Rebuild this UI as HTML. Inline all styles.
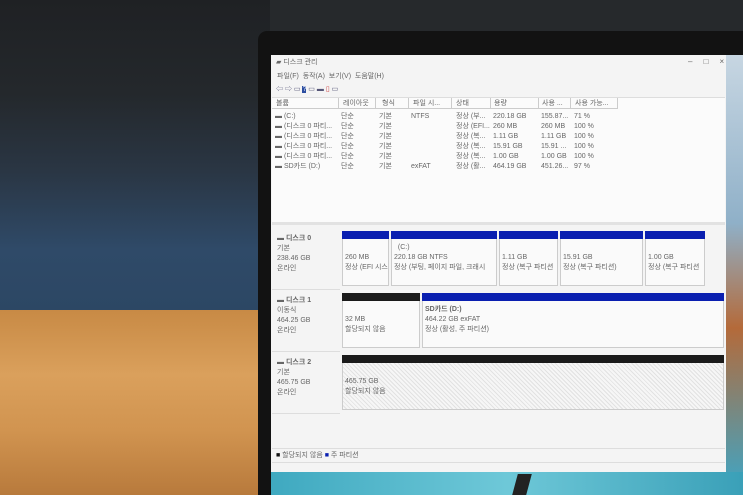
<!DOCTYPE html><html><head><style>
*{margin:0;padding:0;box-sizing:border-box}
body{width:743px;height:495px;overflow:hidden;position:relative;font-family:"Liberation Sans","Noto Sans CJK KR",sans-serif;font-size:7px;color:#555;background:#26292c}
.a{position:absolute}
.t{position:absolute;white-space:nowrap;font-size:7px;color:#666;line-height:8px}
.bar{position:absolute;height:8px}
.box{position:absolute;background:#fafafa;border:1px solid #ccc}
</style></head><body>
<div class="a" style="left:0;top:0;width:270px;height:312px;background:linear-gradient(180deg,#1f2124 0%,#24282c 30%,#2a3644 55%,#2f4a68 80%,#2c4764 100%)"></div>
<div class="a" style="left:0;top:310px;width:265px;height:185px;background:linear-gradient(180deg,#c88a45 0%,#daa05c 35%,#d19450 65%,#b87a3c 100%)"></div>
<div class="a" style="left:258px;top:31px;width:485px;height:464px;background:#121212;border-radius:9px 0 0 0"></div>
<div class="a" style="left:726px;top:55px;width:17px;height:420px;background:linear-gradient(180deg,#c7d6e2,#8fb0c8 40%,#b46a3a 65%,#4aa0b8)"></div>
<div class="a" style="left:271px;top:472px;width:472px;height:23px;background:linear-gradient(90deg,#3fa9c0,#6ec8d8 50%,#3aa0b8)"></div>
<div class="a" style="left:515px;top:474px;width:14px;height:21px;background:#222;transform:skewX(-15deg)"></div>
<div class="a" style="left:271px;top:55px;width:455px;height:417px;background:#f4f4f4"></div>
<div class="t" style="left:276px;top:59px">▰ 디스크 관리</div>
<div class="t" style="left:688px;top:58px;font-size:8px">–&nbsp;&nbsp;&nbsp;&nbsp;&nbsp;□&nbsp;&nbsp;&nbsp;&nbsp;&nbsp;×</div>
<div class="t" style="left:277px;top:73px">파일(F)&nbsp;&nbsp;동작(A)&nbsp;&nbsp;보기(V)&nbsp;&nbsp;도움말(H)</div>
<div class="t" style="left:276px;top:86px;color:#557">⇦ ⇨ ▭ <span style="background:#2b4da0;color:#fff">?</span> ▭ ▬ <span style="color:#c44">▯</span> ▭</div>
<div class="a" style="left:272px;top:97px;width:453px;height:125px;background:#fbfbfb;border-top:1px solid #ddd"></div>
<div class="a" style="left:272px;top:98px;width:345px;height:11px;border-bottom:1px solid #ccc"></div>
<div class="t" style="left:276px;top:100px">볼륨</div><div class="t" style="left:343px;top:100px">레이아웃</div><div class="t" style="left:382px;top:100px">형식</div><div class="t" style="left:413px;top:100px">파일 시...</div><div class="t" style="left:456px;top:100px">상태</div><div class="t" style="left:494px;top:100px">용량</div><div class="t" style="left:542px;top:100px">사용 ...</div><div class="t" style="left:575px;top:100px">사용 가능...</div>
<div class="a" style="left:338px;top:98px;width:1px;height:11px;background:#ccc"></div><div class="a" style="left:375px;top:98px;width:1px;height:11px;background:#ccc"></div><div class="a" style="left:408px;top:98px;width:1px;height:11px;background:#ccc"></div><div class="a" style="left:451px;top:98px;width:1px;height:11px;background:#ccc"></div><div class="a" style="left:490px;top:98px;width:1px;height:11px;background:#ccc"></div><div class="a" style="left:538px;top:98px;width:1px;height:11px;background:#ccc"></div><div class="a" style="left:570px;top:98px;width:1px;height:11px;background:#ccc"></div><div class="a" style="left:617px;top:98px;width:1px;height:11px;background:#ccc"></div>
<div class="t" style="left:275px;top:112px;line-height:10px">▬ (C:)<br>▬ (디스크 0 파티...<br>▬ (디스크 0 파티...<br>▬ (디스크 0 파티...<br>▬ (디스크 0 파티...<br>▬ SD카드 (D:)</div>
<div class="t" style="left:341px;top:112px;line-height:10px">단순<br>단순<br>단순<br>단순<br>단순<br>단순</div>
<div class="t" style="left:379px;top:112px;line-height:10px">기본<br>기본<br>기본<br>기본<br>기본<br>기본</div>
<div class="t" style="left:411px;top:112px;line-height:10px">NTFS<br><br><br><br><br>exFAT</div>
<div class="t" style="left:456px;top:112px;line-height:10px">정상 (부...<br>정상 (EFI...<br>정상 (복...<br>정상 (복...<br>정상 (복...<br>정상 (활...</div>
<div class="t" style="left:493px;top:112px;line-height:10px">220.18 GB<br>260 MB<br>1.11 GB<br>15.91 GB<br>1.00 GB<br>464.19 GB</div>
<div class="t" style="left:541px;top:112px;line-height:10px">155.87...<br>260 MB<br>1.11 GB<br>15.91 ...<br>1.00 GB<br>451.26...</div>
<div class="t" style="left:574px;top:112px;line-height:10px">71 %<br>100 %<br>100 %<br>100 %<br>100 %<br>97 %</div>
<div class="a" style="left:272px;top:222px;width:453px;height:3px;background:#e2e2e2"></div>
<div class="t" style="left:277px;top:234px;line-height:10px"><b>▬ 디스크 0</b><br>기본<br>238.46 GB<br>온라인</div>
<div class="t" style="left:277px;top:296px;line-height:10px"><b>▬ 디스크 1</b><br>이동식<br>464.25 GB<br>온라인</div>
<div class="t" style="left:277px;top:358px;line-height:10px"><b>▬ 디스크 2</b><br>기본<br>465.75 GB<br>온라인</div>
<div class="a" style="left:272px;top:289px;width:68px;height:1px;background:#ddd"></div><div class="a" style="left:272px;top:351px;width:68px;height:1px;background:#ddd"></div><div class="a" style="left:272px;top:413px;width:68px;height:1px;background:#ddd"></div>
<div class="box" style="left:342px;top:231px;width:47px;height:55px"></div><div class="bar" style="left:342px;top:231px;width:47px;background:#0a1fb0"></div>
<div class="box" style="left:391px;top:231px;width:106px;height:55px"></div><div class="bar" style="left:391px;top:231px;width:106px;background:#0a1fb0"></div>
<div class="box" style="left:499px;top:231px;width:59px;height:55px"></div><div class="bar" style="left:499px;top:231px;width:59px;background:#0a1fb0"></div>
<div class="box" style="left:560px;top:231px;width:83px;height:55px"></div><div class="bar" style="left:560px;top:231px;width:83px;background:#0a1fb0"></div>
<div class="box" style="left:645px;top:231px;width:60px;height:55px"></div><div class="bar" style="left:645px;top:231px;width:60px;background:#0a1fb0"></div>
<div class="t" style="left:345px;top:253px;line-height:10px">260 MB<br>정상 (EFI 시스</div>
<div class="t" style="left:394px;top:243px;line-height:10px">&nbsp;&nbsp;(C:)<br>220.18 GB NTFS<br>정상 (부팅, 페이지 파일, 크래시</div>
<div class="t" style="left:502px;top:253px;line-height:10px">1.11 GB<br>정상 (복구 파티션</div>
<div class="t" style="left:563px;top:253px;line-height:10px">15.91 GB<br>정상 (복구 파티션)</div>
<div class="t" style="left:648px;top:253px;line-height:10px">1.00 GB<br>정상 (복구 파티션</div>
<div class="box" style="left:342px;top:293px;width:78px;height:55px"></div><div class="bar" style="left:342px;top:293px;width:78px;background:#1a1a1a"></div>
<div class="box" style="left:422px;top:293px;width:302px;height:55px"></div><div class="bar" style="left:422px;top:293px;width:302px;background:#0a1fb0"></div>
<div class="t" style="left:345px;top:315px;line-height:10px">32 MB<br>할당되지 않음</div>
<div class="t" style="left:425px;top:305px;line-height:10px"><b>SD카드 (D:)</b><br>464.22 GB exFAT<br>정상 (활성, 주 파티션)</div>
<div class="box" style="left:342px;top:355px;width:382px;height:55px;background:repeating-linear-gradient(45deg,#f6f6f6 0 2px,#e2e2e2 2px 3px)"></div><div class="bar" style="left:342px;top:355px;width:382px;background:#1a1a1a"></div>
<div class="t" style="left:345px;top:377px;line-height:10px">465.75 GB<br>할당되지 않음</div>
<div class="a" style="left:272px;top:448px;width:453px;height:1px;background:#ddd"></div>
<div class="t" style="left:276px;top:452px"><span style="color:#111">■</span> 할당되지 않음 <span style="color:#0a1fb0">■</span> 주 파티션</div>
<div class="a" style="left:272px;top:462px;width:453px;height:1px;background:#ddd"></div>
</body></html>
